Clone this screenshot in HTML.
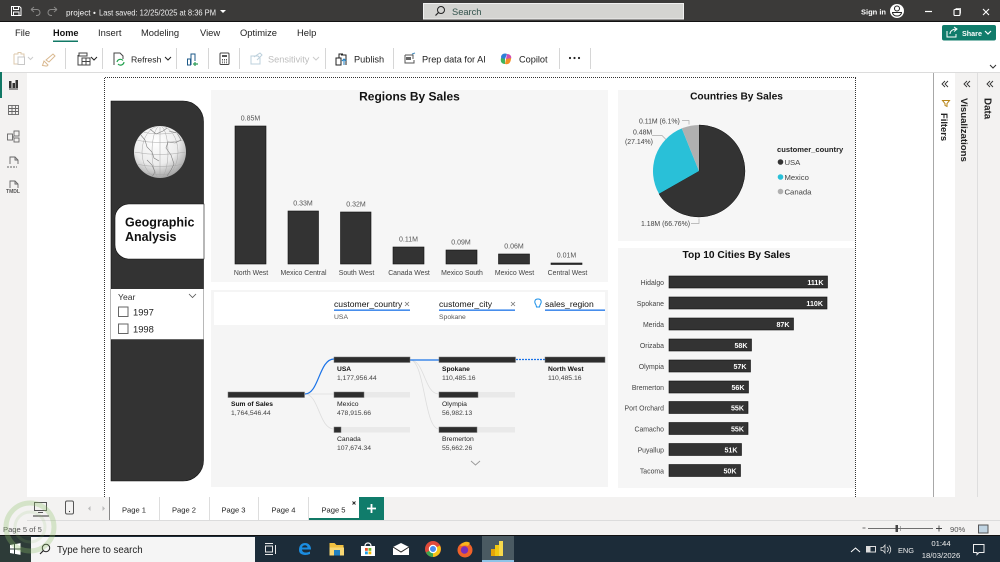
<!DOCTYPE html>
<html><head><meta charset="utf-8"><title>Geographic Analysis</title>
<style>
html,body{margin:0;padding:0;background:#fff;overflow:hidden}
svg{display:block;font-family:"Liberation Sans",sans-serif}
.v{font-size:7px;fill:#555;text-anchor:middle}
.c{font-size:6.900px;fill:#444;text-anchor:end}
.w{font-size:7.100px;fill:#fff;font-weight:bold;text-anchor:end}
.lb{font-size:6.700px;fill:#111;font-weight:bold}
.ln{font-size:6.800px;fill:#444}
.f{font-size:8.600px;fill:#111}
.t{font-size:9.400px;fill:#222}
.b{font-size:9.200px;fill:#222}
.pg{font-size:7.600px;fill:#222;text-anchor:middle}
.bar{fill:#333;stroke:#111;stroke-width:.6}
.ic{fill:none;stroke:#444;stroke-width:1}
</style></head><body>
<svg width="1000" height="562" viewBox="0 0 1000 562" xmlns="http://www.w3.org/2000/svg">
<rect width="1000" height="562" fill="#fff"/>
<!-- title bar -->
<rect width="1000" height="22" fill="#3b3a39"/>
<rect y="21" width="1000" height="1" fill="#111"/>
<g fill="none" stroke="#fff" stroke-width="1">
<path d="M11.500 6.500h8l1.500 1.500v7.500h-9.500z"/><path d="M13.500 6.500v3h5v-3M13.500 15.500v-3.500h5.500v3.500"/>
</g>
<g fill="none" stroke="#8a8988" stroke-width="1"><path d="M31 9.500l3-2.500M31 9.500h6a3 3 0 0 1 0 6h-1M31 9.500l3 2.500"/><path d="M57 9.500l-3-2.500M57 9.500h-6a3 3 0 0 0 0 6h1M57 9.500l-3 2.500"/></g>
<text x="66" y="15.500" font-size="8.200" fill="#f2f2f2">project</text>
<text x="93" y="15.500" font-size="8.200" fill="#f2f2f2">•</text>
<text x="99" y="15.500" font-size="8.200" fill="#f2f2f2" textLength="117" lengthAdjust="spacingAndGlyphs">Last saved: 12/25/2025 at 8:36 PM</text>
<path d="M220 10h6l-3 3z" fill="#fff"/>
<rect x="423.500" y="3.500" width="260" height="15.500" fill="#d4d4d1" stroke="#f0f0f0"/>
<circle cx="441" cy="10" r="3.500" fill="none" stroke="#222" stroke-width="1"/><path d="M438.500 12.500l-3 3" stroke="#222" stroke-width="1.200"/>
<text x="452" y="15" font-size="9.300" fill="#33534c">Search</text>
<text x="861" y="14.500" font-size="7.500" font-weight="bold" fill="#fff">Sign in</text>
<circle cx="897" cy="11" r="7" fill="#fff"/><circle cx="897" cy="8.500" r="2.500" fill="none" stroke="#222"/><path d="M892.500 12.500h9a4.500 3.500 0 0 1-9 0z" fill="none" stroke="#222"/>
<path d="M925 11.500h7" stroke="#fff" stroke-width="1.200"/>
<rect x="954" y="9.500" width="6" height="6" rx="1" fill="none" stroke="#fff" stroke-width="1.100"/><path d="M956 9v-.5h4.500v5" fill="none" stroke="#fff" stroke-width=".8"/>
<path d="M983 9l6 6M989 9l-6 6" stroke="#fff" stroke-width="1.100"/>
<!-- ribbon -->
<text x="15" y="36" class="t">File</text>
<text x="53" y="36" class="t" style="font-weight:bold;fill:#111;font-size:9.200px">Home</text>
<text x="98" y="36" class="t">Insert</text>
<text x="141" y="36" class="t">Modeling</text>
<text x="200" y="36" class="t">View</text>
<text x="240" y="36" class="t">Optimize</text>
<text x="297" y="36" class="t">Help</text>
<rect x="53" y="40.500" width="25" height="1.500" fill="#117865"/>
<rect x="942" y="25" width="54" height="15.500" rx="2" fill="#107c6b"/>
<path d="M947 31v6h9v-3M950 34c0-3 3-5 6-5M954 27l3 2-3 2.500" fill="none" stroke="#fff" stroke-width="1"/>
<text x="962" y="36" font-size="7.200" font-weight="bold" fill="#fff">Share</text>
<path d="M985 31l3 3 3-3" fill="none" stroke="#fff" stroke-width="1.200"/>
<g stroke="#d6d6d6" stroke-width="1"><path d="M65.500 48v21M102.500 48v21M176.500 48v21M208.500 48v21M239.500 48v21M325.500 48v21M393.500 48v21M559.500 48v21M590.500 48v21"/></g>
<!-- toolbar icons -->
<g fill="none" stroke="#ddc9ac" stroke-width="1"><path d="M14 54h4v-1.500h3V54h3v3M14 54v10h4"/><rect x="18" y="57" width="6.500" height="7.500" stroke="#c8c8c8"/></g>
<path d="M28 57l2.500 2.500 2.500-2.500" fill="none" stroke="#ccc"/>
<path d="M46 60l7-6 2 2-6 6zM44 61l4 4-1 1c-2 0-3-.5-4.500-.5z" fill="none" stroke="#d9b88f"/>
<g class="ic"><rect x="79" y="53" width="8" height="3"/><path d="M78 55v10h4"/><rect x="82" y="58" width="8" height="7"/><path d="M82 61.500h8M86 58v7"/></g>
<path d="M91 57l3 3 3-3" fill="none" stroke="#222" stroke-width="1"/>
<path d="M114 65V53h6l3 3v3" fill="none" stroke="#444"/><path d="M117 62a3.500 3.500 0 0 1 6-1.500M124 62a3.500 3.500 0 0 1-6 2" fill="none" stroke="#20a04c" stroke-width="1.200"/>
<text x="131" y="62.500" class="b" style="font-size:8.700px">Refresh</text>
<path d="M165 57l3 3 3-3" fill="none" stroke="#222" stroke-width="1"/>
<path d="M187.500 65v-6h3v6zM191 65V54h4v7" fill="none" stroke="#1c5a88"/><path d="M195 62v4M193 64h5" stroke="#2c9c58" stroke-width="1.200"/>
<rect x="220" y="53" width="9" height="11.500" rx="1" fill="none" stroke="#444"/><rect x="222" y="55" width="5" height="2" fill="#555"/><path d="M222 59.500h5M222 61h5M222 62.800h5" stroke="#555" stroke-dasharray="1 1"/>
<path d="M251 56h7l2 2v6h-9z M254 57l6-4 2 2-5 5" fill="none" stroke="#bcd0dc"/>
<text x="268" y="62.500" class="b" style="fill:#bdbdbd">Sensitivity</text>
<path d="M313 57l3 3 3-3" fill="none" stroke="#ccc" stroke-width="1"/>
<path d="M336 58h5v7h-5zM341 55h5v10M339 58v-4h4" fill="none" stroke="#222"/><path d="M344 65v-6M342 61l2-2 2 2" fill="none" stroke="#1c7ec0"/>
<text x="354" y="62.500" class="b" style="font-size:9.200px">Publish</text>
<path d="M405 55h8v4M405 55v8h9v-3" fill="none" stroke="#555"/><rect x="406" y="57" width="5" height="3" fill="#666"/><path d="M412 54l3-1" stroke="#4a90c0"/>
<text x="422" y="62.500" class="b" style="font-size:9.200px">Prep data for AI</text>
<path d="M501 57a4 4 0 0 1 6-3l-2 5-3 3z" fill="#2f7fd8"/><path d="M507 54c3 0 5 2 4 5l-5 0z" fill="#d14fb0"/><path d="M511 58c0 4-2 7-6 6l1-5z" fill="#f39025"/><path d="M505 64c-3 0-5-2-4-6l4 1z" fill="#3fb35c"/>
<text x="519" y="62.500" class="b" style="font-size:9.200px">Copilot</text>
<circle cx="570" cy="58" r="1.100" fill="#222"/><circle cx="574.500" cy="58" r="1.100" fill="#222"/><circle cx="579" cy="58" r="1.100" fill="#222"/>
<path d="M990 65l3 3 3-3" fill="none" stroke="#333" stroke-width="1"/>
<rect y="72" width="1000" height="1" fill="#dcdcdc"/>
<!-- left rail -->
<rect y="73" width="27" height="424" fill="#f3f2f1"/>
<rect y="72" width="2" height="26" fill="#117865"/>
<g fill="#333"><rect x="9" y="81" width="2.500" height="7"/><rect x="12.500" y="83" width="2.500" height="5"/><rect x="15.500" y="80" width="2.500" height="8"/><rect x="9" y="88.500" width="9" height="1"/></g>
<g fill="none" stroke="#666" stroke-width=".9"><rect x="8.500" y="105.500" width="10" height="9"/><path d="M8.500 108.500h10M8.500 111.500h10M12 105.500v9M15.500 105.500v9"/></g>
<g fill="none" stroke="#666" stroke-width=".9"><rect x="7.500" y="134" width="5" height="6"/><rect x="14" y="131" width="5" height="5"/><rect x="14" y="138" width="5" height="4"/><path d="M12.500 137H14"/></g>
<g fill="none" stroke="#666" stroke-width=".9"><path d="M10 164v-7h5l3 3v4"/><path d="M15 157v3h3"/><path d="M7 167h10" stroke-dasharray="2 1"/></g>
<g fill="none" stroke="#666" stroke-width=".9"><path d="M10 188v-7h5l3 3v4"/><path d="M15 181v3h3"/></g>
<text x="13" y="193" font-size="5" fill="#555" text-anchor="middle" font-weight="bold">TMDL</text>
<!-- right panes -->
<rect x="933" y="73" width="1" height="424" fill="#a8a8a8"/>
<rect x="955" y="73" width="22" height="424" fill="#f3f2f1"/>
<rect x="977" y="73" width="1" height="424" fill="#dedede"/>
<rect x="978" y="73" width="22" height="447" fill="#f3f2f1"/>
<rect x="955" y="497" width="45" height="23" fill="#f3f2f1"/>
<g fill="none" stroke="#333" stroke-width=".9"><path d="M945 81l-3 3 3 3M948 81l-3 3 3 3M967 81l-3 3 3 3M970 81l-3 3 3 3M990 81l-3 3 3 3M993 81l-3 3 3 3"/></g>
<path d="M942.500 100.500h7l-2.500 3v3l-2 -1v-2z" fill="none" stroke="#b8861a" stroke-width="1"/>
<text transform="translate(941,113) rotate(90)" font-size="9.400" font-weight="bold" fill="#222">Filters</text>
<text transform="translate(961,98) rotate(90)" font-size="9.600" font-weight="bold" fill="#222">Visualizations</text>
<text transform="translate(984.500,98) rotate(90)" font-size="9.800" font-weight="bold" fill="#222">Data</text>
<!-- report frame -->
<path d="M105 77.500H856M104.500 78V497M855.500 78V497" fill="none" stroke="#333" stroke-width="1" stroke-dasharray="1 1"/>
<!-- left panel -->
<path d="M111 101h72a20.500 20.500 0 0 1 20.500 20.500v339a20.500 20.500 0 0 1-20.500 20.500h-72z" fill="#333" stroke="#111" stroke-width=".6"/>
<defs><radialGradient id="g" cx=".42" cy=".3" r=".8"><stop offset="0" stop-color="#fff"/><stop offset=".55" stop-color="#ececec"/><stop offset="1" stop-color="#8e8e8e"/></radialGradient>
<clipPath id="gc"><circle cx="160" cy="152" r="25.500"/></clipPath></defs>
<circle cx="160" cy="152" r="26" fill="url(#g)"/>
<g clip-path="url(#gc)" fill="none" stroke="#a8a8a8" stroke-width=".5">
<ellipse cx="160" cy="152" rx="8" ry="26"/><ellipse cx="160" cy="152" rx="18" ry="26"/><path d="M160 126v52"/>
<path d="M135 140q25 5 50 0M134 152q26 5 52 0M135 164q25 5 50 0M142 132q18 4 36 0M143 173q17 3 34 0"/>
<path d="M140 134l5 6 2 7 5 5 2 6 5 3M150 129l6 5 7-3 4-3M169 131l8 2 4 7-6 3-7-1-2 6 5 7 3 9-3 6-4 6M147 160l5 5 3 7-3 5" stroke="#808080" stroke-width=".6"/>
</g>
<!-- title card -->
<path d="M129 204h75v55h-75a14 14 0 0 1-14-14v-27a14 14 0 0 1 14-14z" fill="#fff" stroke="#111" stroke-width=".6"/>
<text x="125" y="226.500" font-size="12.500" font-weight="bold" fill="#111">Geographic</text>
<text x="125" y="241" font-size="12.500" font-weight="bold" fill="#111">Analysis</text>
<!-- slicer -->
<rect x="111" y="289" width="92.500" height="50" fill="#fff"/>
<rect x="111" y="339" width="92.500" height="1" fill="#666"/>
<text x="118" y="300" font-size="8.600" fill="#333">Year</text>
<path d="M189 294l3.500 3.500 3.500-3.500" fill="none" stroke="#555" stroke-width=".8"/>
<rect x="118.500" y="307" width="9.500" height="9.500" fill="#fff" stroke="#666"/>
<text x="133" y="315.500" font-size="9.400" fill="#222">1997</text>
<rect x="118.500" y="324" width="9.500" height="9.500" fill="#fff" stroke="#666"/>
<text x="133" y="332.500" font-size="9.400" fill="#222">1998</text>
<!-- bar chart panel -->
<rect x="211" y="90" width="397" height="192" fill="#f6f6f6"/>
<text x="409.500" y="100.500" font-size="12" font-weight="bold" text-anchor="middle" fill="#111">Regions By Sales</text>
<rect class="bar" x="235" y="126" width="31" height="138"/><rect class="bar" x="288" y="211" width="30.500" height="53"/><rect class="bar" x="340.500" y="212" width="30.500" height="52"/><rect class="bar" x="393" y="247" width="31" height="17"/><rect class="bar" x="446" y="250" width="31" height="14"/><rect class="bar" x="498.500" y="254" width="31" height="10"/><rect class="bar" x="551" y="263" width="31" height="1.500"/>
<text class="v" x="250.500" y="120.500">0.85M</text><text class="v" x="303" y="205.500">0.33M</text><text class="v" x="356" y="206.500">0.32M</text><text class="v" x="408.500" y="241.500">0.11M</text><text class="v" x="461" y="244.500">0.09M</text><text class="v" x="514" y="248.500">0.06M</text><text class="v" x="566.500" y="257.500">0.01M</text>
<g class="v" style="fill:#444;font-size:6.900px"><text x="251" y="275">North West</text><text x="303.500" y="275">Mexico Central</text><text x="356.500" y="275">South West</text><text x="409" y="275">Canada West</text><text x="462" y="275">Mexico South</text><text x="514.500" y="275">Mexico West</text><text x="567.500" y="275">Central West</text></g>
<!-- decomposition panel -->
<rect x="211" y="290" width="397" height="197" fill="#f5f5f5"/>
<rect x="214" y="292" width="391" height="33" fill="#fff"/>
<text x="334" y="307" class="f">customer_country</text><path d="M405 302l4 4M409 302l-4 4" stroke="#777" stroke-width=".8"/><rect x="334" y="309.500" width="76" height="1.300" fill="#1a73e8"/><text x="334" y="319" font-size="6.800" fill="#555">USA</text>
<text x="439" y="307" class="f">customer_city</text><path d="M511 302l4 4M515 302l-4 4" stroke="#777" stroke-width=".8"/><rect x="439" y="309.500" width="76" height="1.300" fill="#1a73e8"/><text x="439" y="319" font-size="6.800" fill="#555">Spokane</text>
<path d="M536 305c-2-3-1.500-6 2-6s4 3 2 6l-.5 2h-3z" fill="none" stroke="#1a8fe8" stroke-width="1"/>
<text x="545" y="307" class="f">sales_region</text><rect x="545" y="309.500" width="60" height="1.300" fill="#1a73e8"/>
<g fill="none" stroke="#ddd" stroke-width=".8"><path d="M305 394h29M305 394c14 0 14 35 29 35M410 360c15 0 14 34 29 34M410 360c15 0 14 69 29 69"/></g>
<path d="M305 394c14 0 14-35 29-35" fill="none" stroke="#1a73e8" stroke-width="1.200"/>
<path d="M410 360h29" stroke="#1a73e8" stroke-width="1.200"/>
<path d="M516 359.500h29" stroke="#1a73e8" stroke-width="1.200" stroke-dasharray="2 1"/>
<g fill="#e9e9e9"><rect x="334" y="392" width="76" height="5.500"/><rect x="334" y="427" width="76" height="5.500"/><rect x="439" y="392" width="76" height="5.500"/><rect x="439" y="427" width="76" height="5.500"/></g>
<g fill="#2d2d2d" stroke="#777" stroke-width=".5"><rect x="228" y="392" width="76.500" height="5.500"/><rect x="334" y="357" width="76" height="5.500"/><rect x="334" y="392" width="30" height="5.500"/><rect x="334" y="427" width="7" height="5.500"/><rect x="439" y="357" width="76.500" height="5.500"/><rect x="439" y="392" width="39" height="5.500"/><rect x="439" y="427" width="38" height="5.500"/><rect x="545" y="357" width="60" height="5.500"/></g>
<text class="lb" x="231" y="406">Sum of Sales</text><text class="ln" x="231" y="415">1,764,546.44</text>
<text class="lb" x="337" y="371">USA</text><text class="ln" x="337" y="380">1,177,956.44</text>
<text class="ln" x="337" y="406" style="fill:#222">Mexico</text><text class="ln" x="337" y="415">478,915.66</text>
<text class="ln" x="337" y="441" style="fill:#222">Canada</text><text class="ln" x="337" y="450">107,674.34</text>
<text class="lb" x="442" y="371">Spokane</text><text class="ln" x="442" y="380">110,485.16</text>
<text class="ln" x="442" y="406" style="fill:#222">Olympia</text><text class="ln" x="442" y="415">56,982.13</text>
<text class="ln" x="442" y="441" style="fill:#222">Bremerton</text><text class="ln" x="442" y="450">55,662.26</text>
<text class="lb" x="548" y="371">North West</text><text class="ln" x="548" y="380">110,485.16</text>
<path d="M471 461l4.500 4 4.500-4" fill="none" stroke="#999" stroke-width=".9"/>
<!-- pie panel -->
<rect x="618" y="90" width="237" height="151" fill="#f6f6f6"/>
<text x="736.500" y="99.500" font-size="10.200" font-weight="bold" text-anchor="middle" fill="#111">Countries By Sales</text>
<path d="M699 171V125A46 46 0 1 1 659 193.800z" fill="#333" stroke="#111" stroke-width=".5"/>
<path d="M699 171L659 193.800A46 46 0 0 1 681.800 128.400z" fill="#29c0d8"/>
<path d="M699 171L681.800 128.400A46 46 0 0 1 699 125z" fill="#b0b0b0"/>
<g font-size="6.900" fill="#444"><text x="639" y="123.500">0.11M (6.1%)</text><text x="633" y="134.500">0.48M</text><text x="625" y="144">(27.14%)</text><text x="641" y="226">1.18M (66.76%)</text></g>
<path d="M682 120.500h7v4M652 135.500h10l4 4M691 223.500h8v-5" fill="none" stroke="#aaa" stroke-width=".7"/>
<text x="777" y="152" font-size="7.600" font-weight="bold" fill="#222">customer_country</text>
<circle cx="780.500" cy="162" r="2.800" fill="#333"/><circle cx="780.500" cy="177" r="2.800" fill="#29c0d8"/><circle cx="780.500" cy="191.500" r="2.800" fill="#b0b0b0"/>
<g font-size="7.700" fill="#444"><text x="784.500" y="165">USA</text><text x="784.500" y="180">Mexico</text><text x="784.500" y="194.500">Canada</text></g>
<!-- top cities panel -->
<rect x="618" y="248" width="237" height="240" fill="#f6f6f6"/>
<text x="736.500" y="258" font-size="10.200" font-weight="bold" text-anchor="middle" fill="#111">Top 10 Cities By Sales</text>
<g class="bar"><rect x="669" y="276" width="158.500" height="12"/><rect x="669" y="297" width="158" height="12"/><rect x="669" y="318" width="124.500" height="12"/><rect x="669" y="339" width="82.500" height="12"/><rect x="669" y="360" width="81.500" height="12"/><rect x="669" y="381" width="79.500" height="12"/><rect x="669" y="401.500" width="79" height="12"/><rect x="669" y="422.500" width="79" height="12"/><rect x="669" y="443.500" width="72.500" height="12"/><rect x="669" y="464.500" width="71.500" height="12"/></g>
<text class="c" x="664" y="285">Hidalgo</text><text class="c" x="664" y="306">Spokane</text><text class="c" x="664" y="327">Merida</text><text class="c" x="664" y="348">Orizaba</text><text class="c" x="664" y="369">Olympia</text><text class="c" x="664" y="390">Bremerton</text><text class="c" x="664" y="410.500">Port Orchard</text><text class="c" x="664" y="431.500">Camacho</text><text class="c" x="664" y="452.500">Puyallup</text><text class="c" x="664" y="473.500">Tacoma</text>
<text class="w" x="823.500" y="285">111K</text><text class="w" x="823" y="306">110K</text><text class="w" x="789.500" y="327">87K</text><text class="w" x="747.500" y="348">58K</text><text class="w" x="746.500" y="369">57K</text><text class="w" x="744.500" y="390">56K</text><text class="w" x="744" y="410.500">55K</text><text class="w" x="744" y="431.500">55K</text><text class="w" x="737.500" y="452.500">51K</text><text class="w" x="736.500" y="473.500">50K</text>
<!-- page tabs -->
<rect x="0" y="497" width="933" height="38" fill="#f3f2f1"/>
<rect x="933" y="497" width="67" height="38" fill="#f3f2f1"/>
<rect x="27" y="520" width="973" height="1" fill="#dcdcdc"/>
<rect x="110" y="497" width="249" height="23" fill="#fff"/>
<path d="M109.500 497v23" stroke="#888"/><path d="M159.500 497v23M209.500 497v23M258.500 497v23M308.500 497v23" stroke="#ddd"/>
<rect x="309" y="518" width="50" height="2" fill="#117865"/>
<text class="pg" x="134" y="512.500">Page 1</text><text class="pg" x="184" y="512.500">Page 2</text><text class="pg" x="233.500" y="512.500">Page 3</text><text class="pg" x="283.500" y="512.500">Page 4</text><text class="pg" x="333.500" y="512.500">Page 5</text>
<path d="M352.500 501.500l3 3M355.500 501.500l-3 3" stroke="#222" stroke-width=".9"/>
<rect x="359" y="497" width="25" height="23" fill="#107c6b"/><path d="M371.500 504v9M367 508.500h9" stroke="#fff" stroke-width="1.800"/>
<g fill="none" stroke="#444" stroke-width=".9"><rect x="34.500" y="502.500" width="12" height="8"/><path d="M38 512.500h5"/></g><rect x="33" y="515.500" width="16" height="1" fill="#333"/>
<rect x="65.500" y="501" width="8" height="13" rx="1.500" fill="none" stroke="#555"/><circle cx="69.500" cy="511.500" r=".6" fill="#333"/>
<path d="M90.500 506l-2.500 2.500 2.500 2.500z" fill="#bbb"/><path d="M102.500 506l2.500 2.500-2.500 2.500z" fill="#bbb"/>
<!-- status -->
<rect y="535" width="1000" height="1" fill="#111"/>
<text x="3" y="532" font-size="7.600" fill="#555">Page 5 of 5</text>
<path d="M862.500 528h3M868 528.500h65" stroke="#444" stroke-width=".8"/>
<rect x="895.500" y="525" width="2.500" height="7" fill="#444"/><path d="M900.500 526v5" stroke="#777" stroke-width=".6"/>
<path d="M936 528.500h6M939 525.500v6" stroke="#444" stroke-width=".9"/>
<text x="950" y="532" font-size="7.600" fill="#555">90%</text>
<rect x="978.500" y="525" width="9.500" height="8" fill="#c0d4e2" stroke="#555"/>
<!-- taskbar -->
<rect y="536" width="1000" height="26" fill="#1c2c39"/>
<rect x="0" y="536" width="31" height="26" fill="#2d3b38"/>
<g fill="#fff"><path d="M10 545l4-.7v4.200h-4zM15 544.100l5.500-1v5.400H15zM10 549.500h4v4.200l-4-.7zM15 549.500h5.500v5.400l-5.500-1z"/></g>
<rect x="31" y="537" width="224" height="25" fill="#f5f5f5"/>
<circle cx="46" cy="548" r="3.700" fill="none" stroke="#222"/><path d="M43.300 550.700l-3.300 3.300" stroke="#222" stroke-width="1.100"/>
<text x="57" y="553" font-size="9.700" fill="#222">Type here to search</text>
<g fill="none" stroke="#e8e8e8" stroke-width="1"><rect x="265.500" y="546" width="7" height="6"/><path d="M265 543.500h8M265 554.500h8M275.500 545v9"/></g>
<path d="M299 550c0-5 3-7 6-7 4 0 6 3 6 6.500h-9c0 3 4 4 8 2v2.500c-5 2-11 1-11-4zM302 547.500h5.500c0-3-5-3-5.500 0z" fill="#1b8de0" fill-rule="evenodd"/>
<path d="M329.500 543h5l2 2h7v3h-14z" fill="#f0c040"/><rect x="329.500" y="547.500" width="14.500" height="8" fill="#f7d774"/><rect x="334" y="550" width="6" height="5.500" fill="#2080c0"/>
<path d="M361 546h14v10h-14z" fill="#fff"/><path d="M365 546c0-4 6-4 6 0" fill="none" stroke="#fff" stroke-width="1.200"/>
<rect x="365" y="548" width="2.800" height="2.800" fill="#e8502a"/><rect x="368.500" y="548" width="2.800" height="2.800" fill="#6cb82c"/><rect x="365" y="551.500" width="2.800" height="2.800" fill="#1f9fe8"/><rect x="368.500" y="551.500" width="2.800" height="2.800" fill="#f6b800"/>
<path d="M393 547l8-4 8 4v8h-16z" fill="#fff"/><path d="M393 547l8 5 8-5" fill="none" stroke="#222" stroke-width="1"/>
<circle cx="433" cy="549" r="8" fill="#e04a3a"/><path d="M433 549l-7 3.500a8 8 0 0 0 7 4.500z" fill="#3ca650"/><path d="M433 549l7-3.500a8 8 0 0 1-7 11.500z" fill="#f5c518"/><circle cx="433" cy="549" r="3.600" fill="#4a8cf0" stroke="#fff" stroke-width="1.200"/>
<circle cx="465" cy="550" r="7.500" fill="#f0622a"/><path d="M460 546c3-5 8-5 10-3l-2 3c-3-1-5 0-8 0z" fill="#f8b51c"/><circle cx="464.500" cy="550" r="3.700" fill="#7b2fb8"/>
<rect x="482" y="536" width="32" height="26" fill="#4a5a62"/><rect x="482" y="560" width="32" height="2" fill="#8fc4e8"/>
<rect x="491" y="549" width="4" height="7" fill="#e5a50a"/><rect x="495" y="545" width="4" height="11" fill="#f2c811"/><rect x="499" y="541" width="4" height="15" fill="#f7d94c"/>
<path d="M851 552l4.500-4 4.500 4" fill="none" stroke="#fff" stroke-width="1"/>
<rect x="866.500" y="546.500" width="9" height="5.500" fill="none" stroke="#ddd"/><rect x="867" y="547" width="3.500" height="4.500" fill="#ddd"/>
<path d="M881 547.500h2l2-2.500v8l-2-2.500h-2zM887 547a3 3 0 0 1 0 5M889 545.500a5.500 5.500 0 0 1 0 8" fill="none" stroke="#ddd" stroke-width=".8"/>
<text x="898" y="553" font-size="7.400" fill="#eee">ENG</text>
<text x="941" y="546" font-size="7.700" fill="#eee" text-anchor="middle">01:44</text>
<text x="941" y="558" font-size="7.700" fill="#eee" text-anchor="middle">18/03/2026</text>
<path d="M973.500 544.500h10.500v8h-5l-2 2v-2h-3.500z" fill="none" stroke="#eee"/>
<circle cx="30" cy="527" r="24" fill="none" stroke="#8fbf6a" stroke-width="5" opacity=".3"/>
<circle cx="30" cy="527" r="15" fill="none" stroke="#8fbf6a" stroke-width="3" opacity=".15"/>
</svg>
</body></html>
